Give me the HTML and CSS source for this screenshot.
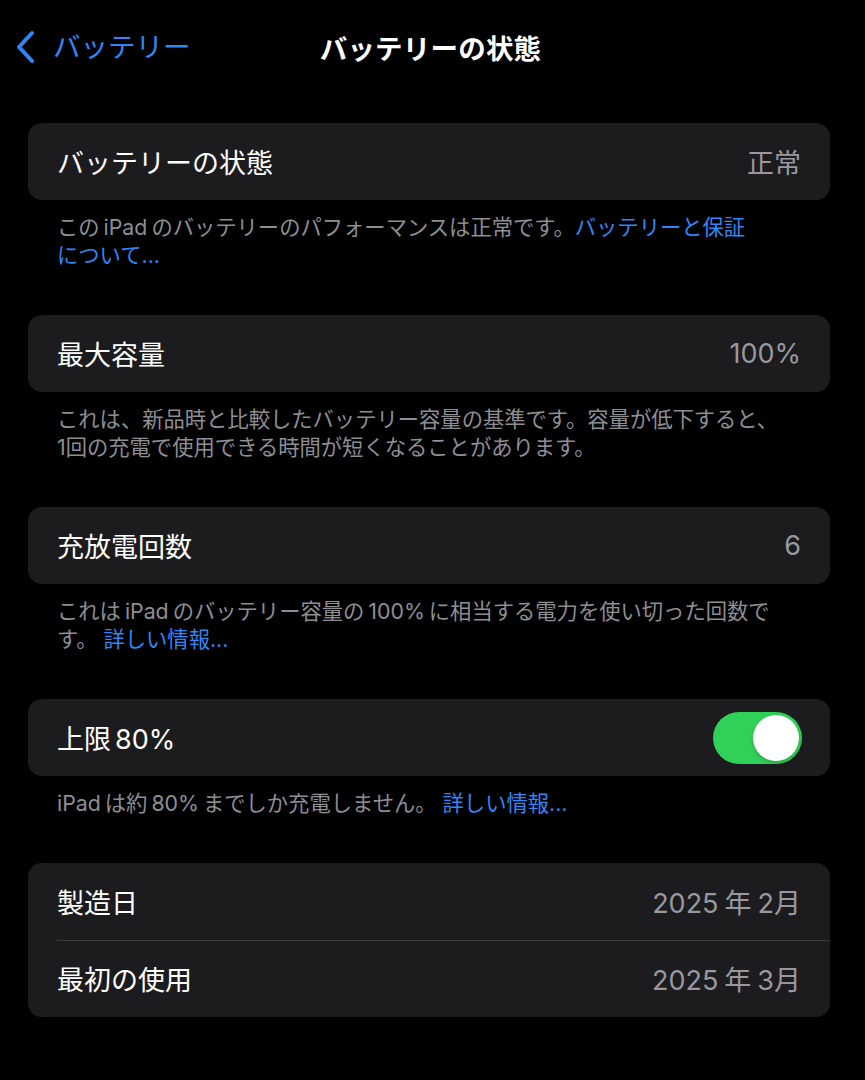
FILE: index.html
```html
<!DOCTYPE html>
<html lang="ja">
<head>
    <meta charset="UTF-8">
    <meta name="viewport" content="width=device-width, initial-scale=1.0">
    <title>バッテリーの状態</title>
    <link rel="stylesheet" href="styles.css">
</head>
<body>
    <header class="nav">
        <a href="#" class="back-btn">
            <svg class="chevron" width="22" height="34" viewBox="0 0 22 34">
                <polyline points="18,3 5,17 18,31" fill="none" stroke="#2f87f5" stroke-width="4" stroke-linecap="round" stroke-linejoin="round"/>
            </svg>
            <span>バッテリー</span>
        </a>
        <h1 class="nav-title">バッテリーの状態</h1>
    </header>

    <main class="content">
        <section class="group">
            <div class="card">
                <div class="row">
                    <span class="label">バッテリーの状態</span>
                    <span class="value">正常</span>
                </div>
            </div>
            <p class="footer">この<span class="en">iPad</span>のバッテリーのパフォーマンスは正常です。<a href="#" class="link">バッテリーと保証<br>について...</a></p>
        </section>

        <section class="group">
            <div class="card">
                <div class="row">
                    <span class="label">最大容量</span>
                    <span class="value">100%</span>
                </div>
            </div>
            <p class="footer">これは、新品時と比較したバッテリー容量の基準です。容量が低下すると、<br>1回の充電で使用できる時間が短くなることがあります。</p>
        </section>

        <section class="group">
            <div class="card">
                <div class="row">
                    <span class="label">充放電回数</span>
                    <span class="value">6</span>
                </div>
            </div>
            <p class="footer">これは<span class="en">iPad</span>のバッテリー容量の<span class="en">100%</span>に相当する電力を使い切った回数で<br>す。 <a href="#" class="link">詳しい情報...</a></p>
        </section>

        <section class="group">
            <div class="card">
                <div class="row">
                    <span class="label">上限<span class="en">80%</span></span>
                    <span class="toggle on"><span class="knob"></span></span>
                </div>
            </div>
            <p class="footer"><span class="en first">iPad</span>は約<span class="en">80%</span>までしか充電しません。 <a href="#" class="link">詳しい情報...</a></p>
        </section>

        <section class="group">
            <div class="card">
                <div class="row">
                    <span class="label">製造日</span>
                    <span class="value">2025<span class="unit">年</span>2月</span>
                </div>
                <div class="row">
                    <span class="label">最初の使用</span>
                    <span class="value">2025<span class="unit">年</span>3月</span>
                </div>
            </div>
        </section>
    </main>
</body>
</html>
```

FILE: styles.css
```css
body {
    font-family: Inter, 'Noto Sans CJK JP', sans-serif;
    margin: 0;
    padding: 0;
    background-color: #000000;
    color: #ffffff;
}
.nav {
    position: relative;
    height: 94px;
    display: flex;
    align-items: center;
    justify-content: center;
}
.back-btn {
    position: absolute;
    left: 14px;
    top: 30px;
    display: flex;
    align-items: center;
    gap: 17px;
    color: #2f87f5;
    text-decoration: none;
    font-size: 27.5px;
    line-height: 34px;
}
.nav-title {
    margin: 0 0 0 -4px;
    font-size: 27.5px;
    font-weight: 700;
    letter-spacing: 0.2px;
}
.content {
    padding: 29px 35px 0 28px;
}
.group {
    margin-bottom: 46px;
}
.card {
    background: #1c1c1e;
    border-radius: 14px;
    overflow: hidden;
}
.row {
    display: flex;
    align-items: center;
    justify-content: space-between;
    min-height: 77px;
    padding: 0 29px;
    font-size: 27px;
    position: relative;
}
.row + .row::before {
    content: '';
    position: absolute;
    left: 29px;
    right: 0;
    top: 0;
    height: 1px;
    background: #3a3a3c;
}
.label {
    color: #ffffff;
}
.value {
    color: #98989e;
}
.unit {
    margin: 0 6px;
}
.en {
    margin: 0 4px;
}
.en.first {
    margin-left: 0;
}
.footer {
    margin: 13px 0 0;
    padding: 0 29px;
    font-size: 21.3px;
    line-height: 28px;
    color: #8e8e93;
}
.link {
    color: #2f87f5;
    text-decoration: none;
}
.toggle {
    width: 89px;
    height: 52px;
    border-radius: 26px;
    background: #30d158;
    position: relative;
    margin-right: -1px;
}
.toggle .knob {
    position: absolute;
    right: 3px;
    top: 3px;
    width: 46px;
    height: 46px;
    border-radius: 50%;
    background: #ffffff;
    box-shadow: 0 2px 4px rgba(0, 0, 0, 0.2);
}
```
